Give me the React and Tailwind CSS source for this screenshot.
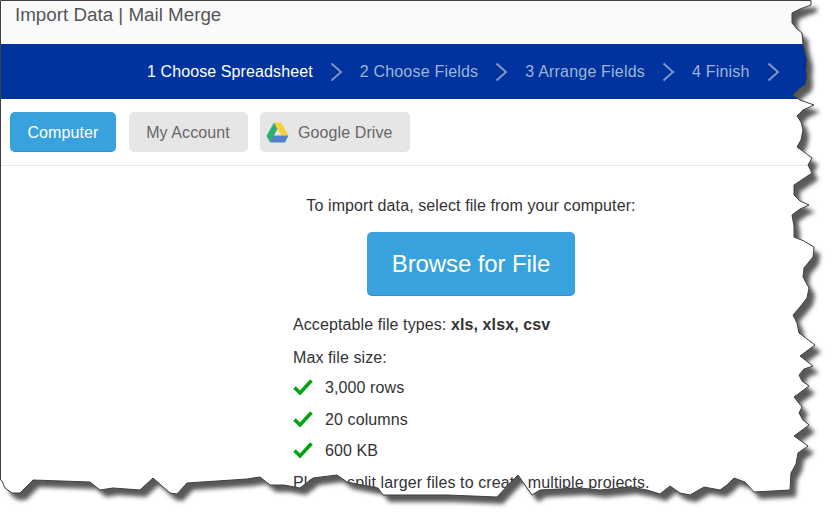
import React from 'react';

const STEPS = [
  { label: '1 Choose Spreadsheet', active: true },
  { label: '2 Choose Fields' },
  { label: '3 Arrange Fields' },
  { label: '4 Finish' },
];

const LIMITS = ['3,000 rows', '20 columns', '600 KB'];

// outline of the torn page, clockwise from the top left corner
const EDGE =
  'M0.5 0.5 L811 0.5 L811 5 L800 9 L792 13 L792 23 L797 29 L802 33 L803 44 L805 52 L807 60 L806 70 L807 78 L805 85 L799 89 L793 95 L800 100 L814 105 L803 110 L797 116 L801 122 L803 130 L801 140 L797 147 L804 152 L812 158 L808 165 L812 173 L803 179 L794 185 L794 195 L800 201 L809 205 L800 209 L792 215 L794 226 L794 237 L804 241 L814 247 L813 257 L804 268 L803 277 L809 288 L807 298 L800 307 L793 315 L797 323 L799 333 L807 339 L815 345 L800 356 L813 366 L804 369 L799 375 L802 381 L809 386 L794 397 L802 407 L799 413 L803 420 L809 425 L794 436 L808 446 L798 453 L796 464 L791 473 L790 490 L772 491 L754 492 L745 482 L734 478 L727 485 L720 490 L704 487 L690 495 L680 493 L670 486 L660 494 L647 490 L630 487 L600 490 L580 488 L540 490 L532 495 L525 485 L518 475 L510 483 L497 497 L447 495 L383 495 L378 488 L347 482 L337 475 L313 478 L300 488 L284 485 L270 485 L260 477 L247 479 L187 483 L177 494 L170 493 L153 478 L140 490 L113 488 L100 490 L90 482 L33 480 L20 493 L12 493 L5 488 L2 481 L0.5 480 Z';

function Chevron() {
  return (
    <svg width="13" height="20" viewBox="0 0 13 20" fill="none" className="shrink-0">
      <path d="M1.5 1.5 L11 10 L1.5 18.5" stroke="#7d97c6" strokeWidth="2" />
    </svg>
  );
}

function DriveIcon() {
  return (
    <svg width="23" height="21" viewBox="0 0 23 21" className="shrink-0">
      <path d="M8 0.5 L15 0.5 L22.5 13.5 L15.5 13.5 Z" fill="#fbd032" />
      <path d="M8 0.5 L11.5 7 L4 20.5 L0.5 14 Z" fill="#2fb06e" />
      <path d="M7.5 13.5 L22.5 13.5 L19 20.5 L4 20.5 Z" fill="#5581c8" />
    </svg>
  );
}

function Check() {
  return (
    <svg width="20" height="18" viewBox="0 0 20 18" fill="none" className="shrink-0 -translate-y-px">
      <path d="M1.5 9.5 L7 15 L18.5 2.5" stroke="#03a50f" strokeWidth="3.6" />
    </svg>
  );
}

// torn edge and drop shadow, lies over the page
function TornEdge() {
  return (
    <svg width="837" height="521" viewBox="0 0 837 521" className="absolute inset-0">
      <defs>
        <filter id="blur" x="-5%" y="-5%" width="110%" height="110%">
          <feGaussianBlur stdDeviation="2" />
        </filter>
        <clipPath id="outside">
          <path d={`M0 0 H837 V521 H0 Z ${EDGE}`} clipRule="evenodd" />
        </clipPath>
      </defs>
      <path d={`M0 0 H837 V521 H0 Z ${EDGE}`} fill="#ffffff" fillRule="evenodd" />
      <g clipPath="url(#outside)">
        <path d={EDGE} transform="translate(6 7)" fill="#585858" filter="url(#blur)" />
      </g>
      <path d={EDGE} fill="none" stroke="#404040" strokeWidth="1" />
    </svg>
  );
}

export default function App() {
  return (
    <div className="relative w-[837px] h-[521px] overflow-hidden bg-white font-['Liberation_Sans',Arial,sans-serif] text-[16px] tracking-[0.1px] text-[#333]">
      <div className="h-[44px] bg-[#fafafa] pl-[15px] pt-[3px] text-[18.8px] leading-[24px] tracking-normal text-[#555]">
        Import Data | Mail Merge
      </div>

      <div className="flex h-[55px] items-center bg-[#00339e] pl-[147px]">
        {STEPS.map((step) => (
          <div key={step.label} className="flex items-center">
            <span className={step.active ? 'text-white' : 'tracking-[0.2px] text-[#9fb5d6]'}>{step.label}</span>
            <div className="mx-[17px]">
              <Chevron />
            </div>
          </div>
        ))}
      </div>

      <div className="flex h-[67px] items-start gap-[12px] border-b border-[#e7e7e7] pl-[10px] pt-[13px]">
        <button className="h-[40px] w-[106px] rounded-[5px] border-b border-[#2f8fc6] bg-[#37a2dc] pt-[2px] text-white">
          Computer
        </button>
        <button className="ml-px h-[40px] w-[119px] rounded-[5px] bg-[#e6e6e6] pr-px pt-px text-[#666]">
          My Account
        </button>
        <button className="flex h-[40px] w-[150px] items-center gap-[9px] rounded-[5px] bg-[#e6e6e6] pl-[6px] pt-px text-[#666]">
          <DriveIcon />
          Google Drive
        </button>
      </div>

      <div className="ml-[293px] w-[356px] pt-[30px]">
        <p className="text-center leading-[20px]">To import data, select file from your computer:</p>
        <div className="mt-[16px] flex justify-center">
          <button className="h-[64px] w-[208px] rounded-[5px] border-b border-[#2f8fc6] bg-[#37a2dc] text-[24px] tracking-[-0.1px] text-white">
            Browse for File
          </button>
        </div>
        <p className="mt-[19px] leading-[20px]">
          Acceptable file types: <b>xls, xlsx, csv</b>
        </p>
        <p className="mt-[13px] leading-[20px]">Max file size:</p>
        <ul className="mt-[10px] flex flex-col gap-[11.5px]">
          {LIMITS.map((limit) => (
            <li key={limit} className="flex h-[20px] items-center gap-[12px] leading-[20px]">
              <Check />
              {limit}
            </li>
          ))}
        </ul>
        <p className="mt-[12px] whitespace-nowrap leading-[20px]">
          Please split larger files to create multiple projects.
        </p>
      </div>

      <TornEdge />
    </div>
  );
}
